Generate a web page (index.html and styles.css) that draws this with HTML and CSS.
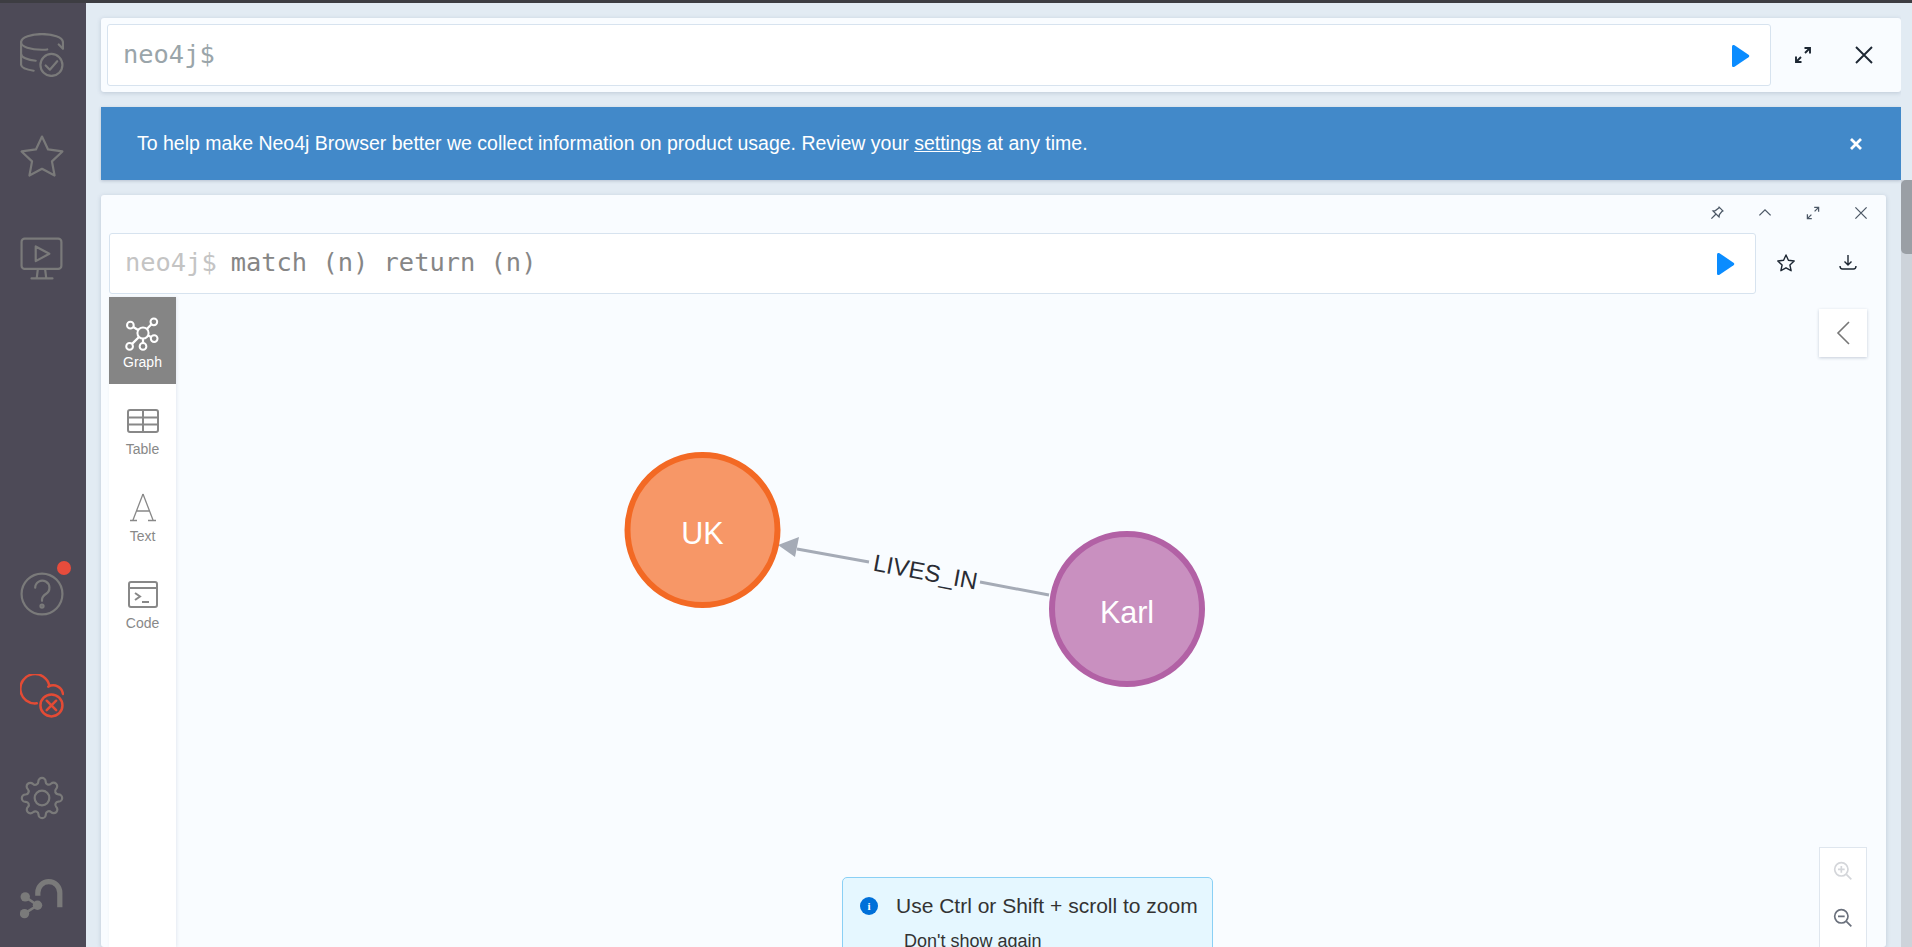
FILE: index.html
```html
<!DOCTYPE html>
<html lang="en">
<head>
<meta charset="utf-8">
<title>Neo4j Browser</title>
<link rel="stylesheet" href="styles.css">
</head>
<body>
<div class="topstrip"></div>
<div class="app">
  <nav class="rail">
    <div class="rail-group">
      <div class="rail-item">
        <svg class="rail-icon" viewBox="0 0 42 42"><path d="M41 14V9C41 4 31 1 21 1S1 4 1 9V30c0 3 5 5 12 6"/><path d="M1 9c0 4 9 7 20 7 2 0 4 0 5-.3"/><path d="M1 20c0 3 6 6 14 6.500"/><path d="M37 11l4 4 1-4"/><circle cx="30" cy="30.500" r="10.500"/><path d="M24.500 31l4 4 7-8"/></svg>
      </div>
      <div class="rail-item">
        <svg class="rail-icon" viewBox="0 0 42 42"><path d="M21 1.500l5.800 12.300 13.700 1.900-10 9.500 2.500 13.500L21 32.300 9 38.700l2.500-13.500-10-9.500 13.700-1.900z"/></svg>
      </div>
      <div class="rail-item">
        <svg class="rail-icon" viewBox="0 0 42 42"><rect x="1.500" y="1.500" width="38" height="29" rx="3"/><path d="M15 9l13 7-13 7z"/><path d="M17 31l-1 8M24 31l1 8M11 39.500h20"/></svg>
      </div>
    </div>
    <div class="rail-group">
      <div class="rail-item">
        <svg class="rail-icon" viewBox="0 0 42 42"><circle cx="21" cy="21" r="19.500"/><path d="M14.500 15a6.800 6.800 0 1 1 10.500 5.800c-2.500 1.600-4 2.700-4 5.700v1"/><circle cx="21" cy="32.500" r="1.500"/></svg>
        <span class="badge"></span>
      </div>
      <div class="rail-item">
        <svg class="rail-icon rail-icon-red" viewBox="0 0 42 42"><path d="M16 28A14 14 0 1 1 28 11"/><path d="M27 12c6-3 13 0 14 7"/><circle cx="30" cy="30" r="10.500"/><path d="M25.500 25.500l9 9M34.500 25.500l-9 9"/></svg>
      </div>
      <div class="rail-item">
        <svg class="rail-icon-gear" viewBox="0 0 24 24"><circle cx="12" cy="12" r="4"/><path d="M19.400 15a1.650 1.650 0 0 0 .33 1.820l.06.06a2 2 0 0 1 0 2.830 2 2 0 0 1-2.830 0l-.06-.06a1.650 1.650 0 0 0-1.820-.33 1.650 1.650 0 0 0-1 1.510V21a2 2 0 0 1-2 2 2 2 0 0 1-2-2v-.09A1.650 1.650 0 0 0 9 19.400a1.650 1.650 0 0 0-1.820.33l-.06.06a2 2 0 0 1-2.830 0 2 2 0 0 1 0-2.830l.06-.06a1.650 1.650 0 0 0 .33-1.820 1.650 1.650 0 0 0-1.510-1H3a2 2 0 0 1-2-2 2 2 0 0 1 2-2h.09A1.650 1.650 0 0 0 4.600 9a1.650 1.650 0 0 0-.33-1.820l-.06-.06a2 2 0 0 1 0-2.830 2 2 0 0 1 2.830 0l.06.06a1.650 1.650 0 0 0 1.820.33H9a1.650 1.650 0 0 0 1-1.510V3a2 2 0 0 1 2-2 2 2 0 0 1 2 2v.09a1.650 1.650 0 0 0 1 1.510 1.650 1.650 0 0 0 1.820-.33l.06-.06a2 2 0 0 1 2.830 0 2 2 0 0 1 0 2.830l-.06.06a1.650 1.650 0 0 0-.33 1.820V9a1.650 1.650 0 0 0 1.510 1H21a2 2 0 0 1 2 2 2 2 0 0 1-2 2h-.09a1.650 1.650 0 0 0-1.510 1z"/></svg>
      </div>
      <div class="rail-item">
        <svg class="rail-icon-logo" viewBox="0 0 42 42"><path class="logo-arch" d="M17 17V14a10.500 10.500 0 0 1 21 0V28"/><path class="logo-link" d="M5 18l11.700 8-12.400 8"/><circle cx="5" cy="18" r="4.500"/><circle cx="16.700" cy="26" r="4.500"/><circle cx="4.300" cy="34" r="4.500"/></svg>
      </div>
    </div>
  </nav>
  <main class="main">
    <div class="stream">
      <section class="card editor-card">
        <div class="input input-large">
          <span class="prompt-large">neo4j$</span>
          <svg class="play" viewBox="0 0 20 24"><path d="M2 2.500v19c0 1.500 1.300 2 2.500 1.300L18.500 13.300c1-.7 1-1.900 0-2.600L4.500 1.200C3.300.5 2 1 2 2.500z"/></svg>
        </div>
        <button class="action action-first"><svg class="ico-dark" viewBox="0 0 20 20"><path d="M3 17l5-5M3 11.500V17h5.500M17 3l-5 5M11.500 3H17v5.500"/></svg></button>
        <button class="action"><svg class="ico-dark" viewBox="0 0 20 20"><path d="M2 2l16 16M18 2L2 18"/></svg></button>
      </section>
      <section class="banner">
        <p class="banner-text">To help make Neo4j Browser better we collect information on product usage. Review your <a class="banner-link">settings</a> at any time.</p>
        <svg class="banner-close" viewBox="0 0 14 14"><path d="M2 2l10 10M12 2L2 12"/></svg>
      </section>
      <section class="card result-card">
        <header class="result-head">
          <svg class="ico-grey" viewBox="0 0 20 20"><path d="M12 2l6 6M13 3l-5 4-3 .5 7.500 7.500.5-3 4-5M8.500 11.500L3 17"/></svg>
          <svg class="ico-grey" viewBox="0 0 20 20"><path d="M3 13l7-7 7 7"/></svg>
          <svg class="ico-grey" viewBox="0 0 20 20"><path d="M3 17l5-5M3 11.500V17h5.500M17 3l-5 5M11.500 3H17v5.500"/></svg>
          <svg class="ico-grey" viewBox="0 0 20 20"><path d="M3 3l14 14M17 3L3 17"/></svg>
        </header>
        <div class="result-editor">
          <div class="input input-small">
            <span class="prompt-small">neo4j$</span><span class="command">match (n) return (n)</span>
            <svg class="play play-small" viewBox="0 0 20 24"><path d="M2 2.500v19c0 1.500 1.300 2 2.500 1.300L18.500 13.300c1-.7 1-1.900 0-2.600L4.500 1.200C3.300.5 2 1 2 2.500z"/></svg>
          </div>
          <button class="action action-star"><svg class="ico-thin" viewBox="0 0 20 20"><path d="M10 2l2.400 5.300 5.800.7-4.300 4 1.200 5.700-5.100-2.900-5.100 2.900L6.100 12 1.800 8l5.800-.7z"/></svg></button>
          <button class="action action-dl"><svg class="ico-thin" viewBox="0 0 20 20"><path d="M10 2v10M6.500 8.500L10 12l3.500-3.500M2 13c0 2 1 3 2.500 3h11c1.500 0 2.500-1 2.500-3"/></svg></button>
        </div>
        <div class="result-body">
          <aside class="tabs">
            <div class="tab tab-active">
              <svg class="tab-icon tab-icon-graph" viewBox="0 0 34 34"><path d="M17 17L5.700 10M17 17l9.700-10M17 17l10 5M17 17v12M17 17L5 29"/><circle class="node-hub" cx="17" cy="17" r="5"/><circle class="node-sat" cx="5.700" cy="10" r="3"/><circle class="node-sat" cx="26.700" cy="7" r="3"/><circle class="node-sat" cx="27" cy="22" r="3"/><circle class="node-sat" cx="17" cy="29" r="3"/><circle class="node-sat" cx="5" cy="29" r="3"/></svg>
              <span class="tab-label">Graph</span>
            </div>
            <div class="tab">
              <svg class="tab-icon" viewBox="0 0 34 34"><rect x="2" y="6" width="30" height="22" rx="2"/><path d="M2 13.500h30M2 20.500h30M17 6v22"/></svg>
              <span class="tab-label">Table</span>
            </div>
            <div class="tab">
              <svg class="tab-icon tab-icon-thin" viewBox="0 0 34 34"><path d="M17 3L7 29M17 3l10 26M10.500 20h13M4 29.500h7M22 29.500h8"/></svg>
              <span class="tab-label">Text</span>
            </div>
            <div class="tab">
              <svg class="tab-icon" viewBox="0 0 34 34"><rect x="3" y="4" width="28" height="25" rx="2"/><path d="M3 10h28M9 15l5 3.500-5 3.500M16 24h7"/></svg>
              <span class="tab-label">Code</span>
            </div>
          </aside>
          <div class="viz">
            <svg class="graph" viewBox="176 297 1710 650">
              <path class="rel" d="M797 549L869 562M980 582L1049 595"/>
              <path class="rel-head" d="M778 545L799 537L795 557z"/>
              <text class="rel-label" transform="translate(924 580) rotate(10.400)">LIVES_IN</text>
              <circle class="node-uk" cx="702.500" cy="530" r="75"/>
              <text class="node-label" x="702.500" y="544">UK</text>
              <circle class="node-karl" cx="1127" cy="609" r="75"/>
              <text class="node-label" x="1127" y="623">Karl</text>
            </svg>
            <button class="panel-toggle"><svg class="chevron" viewBox="0 0 14 24"><path d="M13 1L2 12l11 11"/></svg></button>
            <div class="zoom-panel">
              <svg class="zoom-icon zoom-off" viewBox="0 0 24 24"><circle cx="10" cy="10" r="8"/><path d="M16 16l6 6M6 10h8M10 6v8"/></svg>
              <svg class="zoom-icon" viewBox="0 0 24 24"><circle cx="10" cy="10" r="8"/><path d="M16 16l6 6M6 10h8"/></svg>
            </div>
            <div class="toast">
              <div class="toast-row">
                <span class="toast-i">i</span>
                <span class="toast-msg">Use Ctrl or Shift + scroll to zoom</span>
              </div>
              <div class="toast-link">Don't show again</div>
            </div>
          </div>
        </div>
      </section>
    </div>
    <div class="scrollbar"><div class="thumb"></div></div>
  </main>
</div>
</body>
</html>
```
FILE: styles.css
```css
* { box-sizing: border-box; }
html, body { height: 100%; margin: 0; overflow: hidden; }
body {
  display: flex;
  flex-direction: column;
  font-family: "Liberation Sans", Arial, sans-serif;
  background: #e2ebf3;
}
button { border: 0; background: none; padding: 0; font: inherit; }

.topstrip { height: 3px; flex: none; background: #3d3d42; }
.app { flex: 1; display: flex; min-height: 0; }

/* left rail */
.rail {
  width: 86px;
  flex: none;
  background: #4d4a57;
  display: flex;
  flex-direction: column;
  justify-content: space-between;
  padding: 1px 3px 0 0;
  margin-bottom: 0;
}
.rail-group { display: flex; flex-direction: column; }
.rail-group:last-child { margin-bottom: -4px; }
.rail-item {
  position: relative;
  height: 102px;
  display: flex;
  align-items: center;
  justify-content: center;
}
.rail-icon, .rail-icon-gear, .rail-icon-logo {
  width: 44px;
  height: 44px;
  fill: none;
  stroke: #7a7a7a;
  stroke-width: 2.1;
  stroke-linecap: round;
  stroke-linejoin: round;
}
.rail-icon-gear { stroke-width: 1.2; }
.rail-icon-red { stroke: #e34b35; stroke-width: 2.4; }
.rail-icon-logo { fill: #7a7a7a; stroke: none; }
.logo-arch { fill: none; stroke: #7a7a7a; stroke-width: 5; stroke-linecap: butt; }
.logo-link { fill: none; stroke: #7a7a7a; stroke-width: 2.5; }
.badge {
  position: absolute;
  left: 57px;
  top: 18px;
  width: 14px;
  height: 14px;
  border-radius: 50%;
  background: #e74c3c;
}

/* main column */
.main { flex: 1; display: flex; min-width: 0; }
.stream {
  flex: 1;
  min-width: 0;
  padding: 15px 0 0 15px;
  display: flex;
  flex-direction: column;
  gap: 15px;
  overflow: hidden;
}
.scrollbar {
  width: 11px;
  flex: none;
  margin-top: 177px;
  background: #cdd3da;
}
.thumb { height: 74px; background: #9a9fa5; border-radius: 5px 0 0 5px; }

.card {
  background: #f9fcff;
  border-radius: 3px;
  box-shadow: 0 1px 4px rgba(80, 100, 130, .25);
}
.editor-card {
  height: 74px;
  flex: none;
  padding: 6px;
  display: flex;
  align-items: center;
}
.input {
  display: flex;
  align-items: center;
  background: #fff;
  border: 1px solid #d7e3ef;
  border-radius: 3px;
  font-family: "DejaVu Sans Mono", "Liberation Mono", monospace;
  font-size: 25.400px;
}
.input-large { width: 1664px; height: 62px; padding: 0 20px 0 15px; }
.prompt-large { color: #9aa5aa; flex: 1; margin-top: -2px; }
.play { width: 20px; height: 24px; fill: #0a8cff; flex: none; margin-top: 2px; }
.action { display: flex; align-items: center; justify-content: center; flex: none; }
.editor-card .action { width: 61px; height: 62px; }
.action-first { margin-left: 1px; }
.ico-dark {
  width: 20px;
  height: 20px;
  fill: none;
  stroke: #1d2733;
  stroke-width: 1.9;
}

.banner {
  height: 73px;
  flex: none;
  background: #4289c9;
  box-shadow: 0 1px 3px rgba(80, 100, 130, .3);
  display: flex;
  align-items: center;
  justify-content: space-between;
  padding: 0 38px 0 36px;
  color: #fff;
}
.banner-text { margin: 0; font-size: 19.500px; }
.banner-link { text-decoration: underline; }
.banner-close { width: 14px; height: 14px; fill: none; stroke: #fff; stroke-width: 2.8; }

.result-card {
  flex: 1;
  margin-right: 15px;
  padding-left: 8px;
  display: flex;
  flex-direction: column;
  min-height: 0;
}
.result-head {
  height: 38px;
  flex: none;
  display: flex;
  align-items: center;
  justify-content: flex-end;
  gap: 32px;
  padding: 0 17px 2px 0;
}
.ico-grey {
  width: 16px;
  height: 16px;
  fill: none;
  stroke: #4c5866;
  stroke-width: 1.6;
}
.result-editor { display: flex; align-items: center; flex: none; height: 60px; }
.input-small { width: 1647px; height: 61px; padding: 0 20px 0 15px; }
.prompt-small { color: #c4c4c4; margin: -2px 14px 0 0; }
.command { color: #868686; flex: 1; margin-top: -2px; }
.action-star { width: 20px; height: 20px; margin-left: 20px; }
.action-dl { width: 20px; height: 20px; margin-left: 42px; }
.ico-thin {
  width: 20px;
  height: 20px;
  fill: none;
  stroke: #1d2733;
  stroke-width: 1.4;
  stroke-linejoin: round;
}

.result-body { flex: 1; display: flex; margin-top: 4px; min-height: 0; }
.tabs {
  width: 67px;
  flex: none;
  background: #fff;
  box-shadow: 1px 0 3px rgba(80, 100, 130, .12);
  position: relative;
  z-index: 1;
}
.tab {
  height: 87px;
  display: flex;
  flex-direction: column;
  align-items: center;
  padding-top: 20px;
  color: #888;
}
.tab-active { background: #858585; color: #fff; }
.tab-icon {
  width: 34px;
  height: 34px;
  fill: none;
  stroke: currentColor;
  stroke-width: 2;
}
.tab-icon-graph { width: 38px; height: 38px; margin: -3px 0 -1px; }
.tab-icon-thin { stroke-width: 1.3; }
.node-hub, .node-sat { fill: #858585; stroke: #fff; stroke-width: 1.8; }
.tab-label { font-size: 14px; margin-top: 2px; line-height: 18px; }

.viz { flex: 1; position: relative; overflow: hidden; }
.graph { position: absolute; left: 0; top: 0; width: 1710px; height: 650px; }
.rel { fill: none; stroke: #a5abb6; stroke-width: 3; }
.rel-head { fill: #a5abb6; }
.rel-label { font-size: 24px; fill: #2a2c34; text-anchor: middle; }
.node-uk { fill: #f79767; stroke: #f36924; stroke-width: 6; }
.node-karl { fill: #c990c0; stroke: #b261a5; stroke-width: 6; }
.node-label { font-size: 30.500px; fill: #fff; text-anchor: middle; }

.panel-toggle {
  position: absolute;
  left: 1643px;
  top: 12px;
  width: 48px;
  height: 48px;
  background: #fff;
  box-shadow: 0 1px 3px rgba(80, 100, 130, .3);
  display: flex;
  align-items: center;
  justify-content: center;
}
.chevron { width: 14px; height: 24px; fill: none; stroke: #777; stroke-width: 1.6; margin-right: 1px; }
.zoom-panel {
  position: absolute;
  left: 1643px;
  top: 550px;
  width: 48px;
  height: 110px;
  background: #fff;
  border: 1px solid #dfe6ee;
  display: flex;
  flex-direction: column;
  align-items: center;
  gap: 27px;
  padding-top: 13px;
}
.zoom-icon { width: 20px; height: 20px; fill: none; stroke: #6a707c; stroke-width: 2; }
.zoom-off { stroke: #d4d6da; }
.toast {
  position: absolute;
  left: 666px;
  top: 580px;
  width: 371px;
  height: 110px;
  background: #e5f7ff;
  border: 1px solid #8ad0f5;
  border-radius: 5px;
  color: #333;
  padding: 17px 0 0 17px;
}
.toast-row { display: flex; align-items: center; gap: 18px; height: 22px; }
.toast-i {
  width: 18px;
  height: 18px;
  border-radius: 50%;
  background: #0070d9;
  color: #fff;
  font: bold 11px/18px "Liberation Serif", serif;
  text-align: center;
}
.toast-msg { font-size: 21px; }
.toast-link { font-size: 18px; margin: 14px 0 0 44px; }
```
